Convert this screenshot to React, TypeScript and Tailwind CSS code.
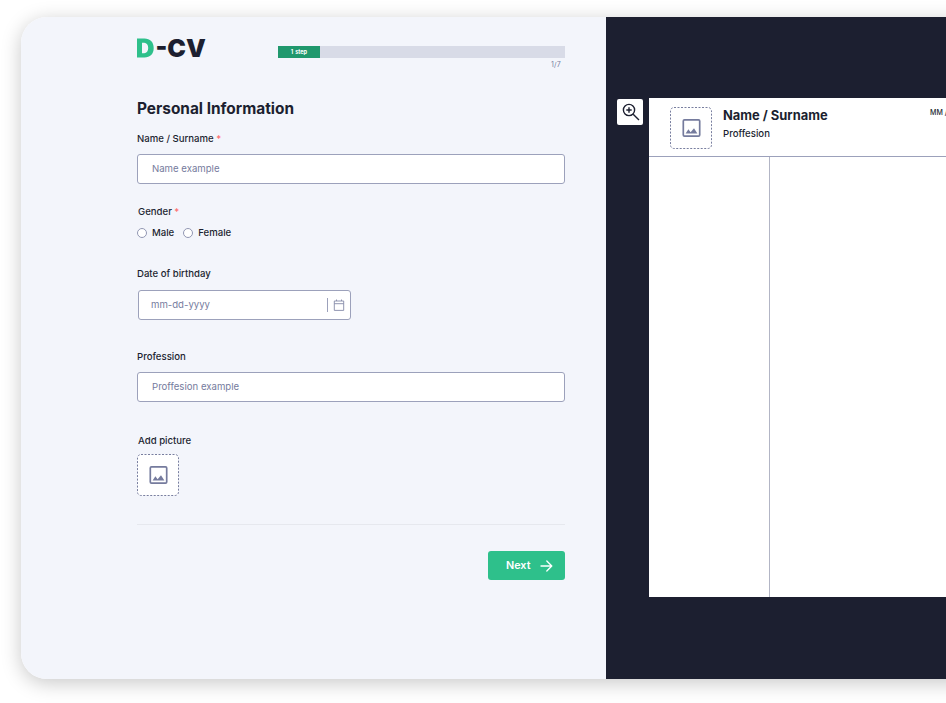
import React from "react";

function Label({ text, required, className = "" }: { text: string; required?: boolean; className?: string }) {
  return (
    <div className={"h-3 whitespace-nowrap text-[9.6px] font-medium leading-3 " + className}>
      {text}
      {required && <span className="ml-[2.5px] text-[#ff6b6b]">*</span>}
    </div>
  );
}

function PictureBox({ className = "" }: { className?: string }) {
  return (
    <svg className={"block shrink-0 " + className} width="42" height="42" viewBox="0 0 42 42" fill="none">
      <rect x="0.5" y="0.5" width="41" height="41" rx="3.5" fill="#fff" stroke="#787e9f" strokeDasharray="2 1.5" />
      <rect x="13.3" y="12.8" width="16.4" height="16.4" rx="1.2" stroke="#757b9d" strokeWidth="1.7" />
      <path d="M15.6 26.5L18.4 22.3L20.6 25.2L24 21.2L27.4 26.5Z" fill="#757b9d" />
    </svg>
  );
}

function Radio({ label }: { label: string }) {
  return (
    <div className="flex items-center">
      <span className="mr-[5px] h-[10px] w-[10px] rounded-full border border-[#9297b3] bg-white" />
      <span className="text-[9.6px] font-medium leading-3">{label}</span>
    </div>
  );
}

function FormPanel() {
  return (
    <section className="flex w-[585px] shrink-0 flex-col bg-[#f3f5fb] pl-[116px] pr-[41px]">
      <header className="mt-[21px] flex h-[54px] items-start">
        <div className="flex h-5 w-[141px] items-center text-[25px] font-black leading-5">
          <svg className="block" width="17" height="20" viewBox="0 0 17 20">
            <path fillRule="evenodd" d="M0 0.5H7.5C13 .5 16.7 4 16.7 10S13 19.5 7.5 19.5H0ZM5 4.8V15.2H7.2C9.7 15.2 11.2 13 11.2 10S9.7 4.8 7.2 4.8Z" fill="#2ec08b" />
          </svg>
          <span className="ml-[1.5px]">-CV</span>
        </div>
        <div className="mt-2 w-[287px]">
          <div className="h-3 bg-[#d8dbe7]">
            <div className="flex h-3 w-[42px] items-center justify-center bg-[#20986d] text-[5.6px] font-bold leading-3 text-white [word-spacing:0.6px]">1 step</div>
          </div>
          <div className="mr-[4px] mt-[3px] text-right text-[7px] leading-2 tracking-[0.2px] text-[#757b9d]">1/7</div>
        </div>
      </header>
      <h1 className="mt-[5px] text-[15.4px] font-bold leading-6">Personal Information</h1>
      <Label text="Name / Surname" required className="mt-3" />
      <div className="mt-[9px] flex h-[30px] items-center rounded-[3px] border border-[#9ca1bb] bg-white pl-[14px] text-[9.6px] text-[#757b9d]">Name example</div>
      <Label text="Gender" required className="ml-px mt-[22px]" />
      <div className="mt-[9px] flex gap-[9px]">
        <Radio label="Male" />
        <Radio label="Female" />
      </div>
      <Label text="Date of birthday" className="mt-[29px]" />
      <div className="ml-px mt-[10px] flex h-[30px] w-[213px] items-center rounded-[3px] border border-[#9ca1bb] bg-white pl-3 pr-[5px] text-[9.6px] text-[#757b9d]">
        <span className="grow">mm-dd-yyyy</span>
        <span className="mr-[5px] h-[14px] w-px bg-[#9ca1bb]" />
        <svg className="block" width="12" height="12" viewBox="0 0 12 12" fill="none" stroke="#858aa8" strokeWidth="0.9">
          <path d="M1.3 2H10.7V11.4H1.3ZM1.3 4.7H10.7M3.5 .5V2M8.5 .5V2" />
        </svg>
      </div>
      <Label text="Profession" className="mt-[31px]" />
      <div className="mt-[9px] flex h-[30px] items-center rounded-[3px] border border-[#9ca1bb] bg-white pl-[14px] text-[9.6px] text-[#757b9d]">Proffesion example</div>
      <Label text="Add picture" className="ml-px mt-[33px]" />
      <PictureBox className="mt-[7px]" />
      <hr className="mt-7 border-0 border-t border-[#e6e8ee]" />
      <button className="mt-[26px] flex h-[29px] w-[77px] items-center self-end rounded-[3px] bg-[#2ec08b] pl-[18px] text-[10.8px] font-semibold text-white">
        <span className="grow pt-px text-left">Next</span>
        <svg className="mr-3 block" width="13" height="12" viewBox="0 0 13 12" fill="none" stroke="#fff" strokeWidth="1.3" strokeLinecap="round" strokeLinejoin="round">
          <path d="M1 6H11.5M6.8 1L11.8 6L6.8 11" />
        </svg>
      </button>
    </section>
  );
}

function Preview() {
  return (
    <section className="flex grow items-start overflow-hidden bg-[#1c1f30] pl-[11px] pt-[81px]">
      <button className="mr-[6px] mt-px flex h-[26px] w-[26px] shrink-0 items-center justify-center rounded-[2px] bg-white">
        <svg className="ml-px" width="18" height="18" viewBox="0 0 18 18" fill="none" stroke="#1c1f30" strokeWidth="1.4">
          <circle cx="7" cy="7" r="5.6" />
          <path d="M11.2 11.2L17 17M7 4.3V9.7M4.3 7H9.7" />
        </svg>
      </button>
      <div className="flex h-[499px] w-[353px] shrink-0 flex-col bg-white">
        <div className="flex h-[59px] shrink-0 border-b border-[#9ca1bb] pl-[21px]">
          <PictureBox className="mt-[9px]" />
          <div className="ml-[11px] mt-[10px] w-[207px] whitespace-nowrap">
            <div className="text-[12.9px] font-bold leading-4">Name / Surname</div>
            <div className="mt-1 text-[9.6px] font-medium leading-3">Proffesion</div>
          </div>
          <div className="mt-[11px] whitespace-nowrap text-[7px] font-medium leading-2">MM / DD / YYYY</div>
        </div>
        <div className="w-[121px] grow border-r border-[#b2b5c5]" />
      </div>
    </section>
  );
}

export default function App() {
  return (
    <main className="h-[703px] w-full overflow-hidden bg-white pl-[21px] pt-[17px] font-['Inter',sans-serif] text-[#1c1f30]">
      <div className="flex h-[662px] w-[1000px] overflow-hidden rounded-[26px] shadow-[0_4px_20px_rgba(0,0,0,0.22)]">
        <FormPanel />
        <Preview />
      </div>
    </main>
  );
}
